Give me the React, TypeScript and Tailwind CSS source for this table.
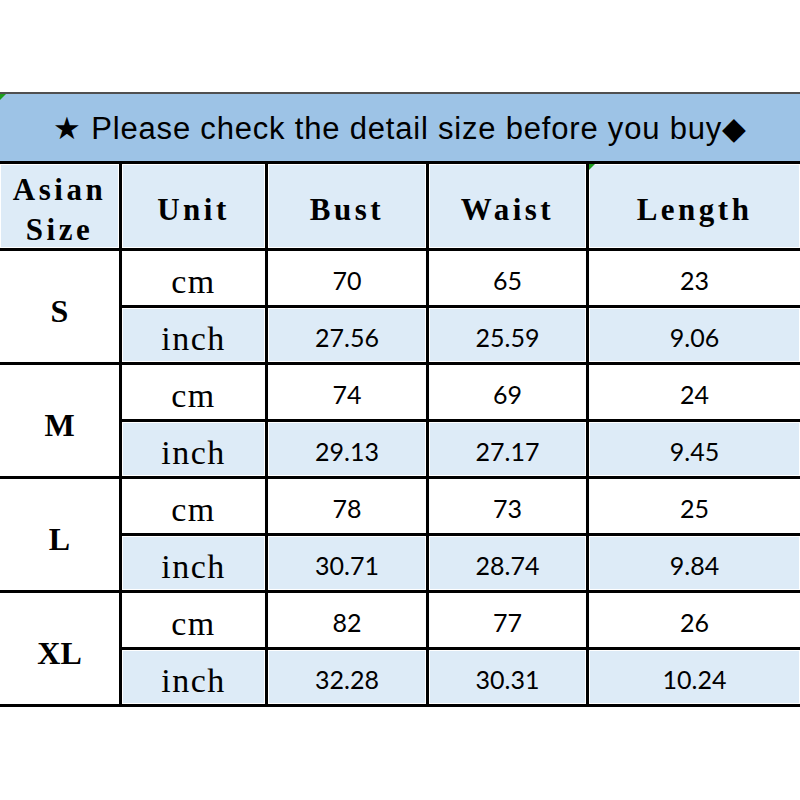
import React from "react";

const groups = [
  { size: "S", cm: ["70", "65", "23"], inch: ["27.56", "25.59", "9.06"] },
  { size: "M", cm: ["74", "69", "24"], inch: ["29.13", "27.17", "9.45"] },
  { size: "L", cm: ["78", "73", "25"], inch: ["30.71", "28.74", "9.84"] },
  { size: "XL", cm: ["82", "77", "26"], inch: ["32.28", "30.31", "10.24"] },
];

const head = "flex items-center justify-center bg-[#ddebf7] shadow-[inset_0_0_0_1px_#ffffff] text-black text-[31px] tracking-[3.5px] font-bold [font-family:'Liberation_Serif',serif] pt-[8px]";
const unitCls = "flex items-center justify-center text-[34px] tracking-[1.5px] text-black [font-family:'Liberation_Serif',serif] pt-[7px]";
const numCls = "flex items-center justify-center text-[25px] text-black [font-family:Lato,sans-serif] pt-[5px]";
const blue = "bg-[#ddebf7] shadow-[inset_0_0_0_1px_#ffffff]";

export default function App() {
  return (
    <div className="w-[800px] h-[800px] bg-white overflow-hidden">
      <div className="h-[92px]" />
      <div className="relative h-[69px] border-t-2 border-[#505050] bg-[#9dc3e6] flex items-center justify-center text-[31px] tracking-[0.8px] text-black [font-family:'Liberation_Sans',Arial,sans-serif] pt-[4px]">
        <span>★ Please check the detail size before you buy◆</span>
        <div className="absolute left-0 top-0 w-0 h-0 border-t-[6px] border-r-[6px] border-t-[#1e9e1e] border-r-transparent" />
      </div>
      <div className="grid grid-cols-[119px_143px_158px_157px_1fr] grid-rows-[84px_54px_54px_54px_54px_54px_54px_54px_54px] gap-[3px] bg-black border-t-[3px] border-b-[3px] border-black">
        <div className={head + " flex-col leading-[40px] pt-[2px]"}>
          <span>Asian</span>
          <span>Size</span>
        </div>
        <div className={head}>Unit</div>
        <div className={head}>Bust</div>
        <div className={head}>Waist</div>
        <div className={head + " relative"}>
          Length
          <div className="absolute left-0 top-0 w-0 h-0 border-t-[6px] border-r-[6px] border-t-[#1e9e1e] border-r-transparent" />
        </div>
        {groups.map((g) => (
          <React.Fragment key={g.size}>
            <div className="row-span-2 bg-white flex items-center justify-center text-[32px] font-bold text-black [font-family:'Liberation_Serif',serif] pt-[8px]">
              {g.size}
            </div>
            <div className={unitCls + " bg-white"}>cm</div>
            {g.cm.map((v, i) => (
              <div key={"c" + i} className={numCls + " bg-white"}>
                {v}
              </div>
            ))}
            <div className={unitCls + " " + blue}>inch</div>
            {g.inch.map((v, i) => (
              <div key={"i" + i} className={numCls + " " + blue}>
                {v}
              </div>
            ))}
          </React.Fragment>
        ))}
      </div>
    </div>
  );
}
